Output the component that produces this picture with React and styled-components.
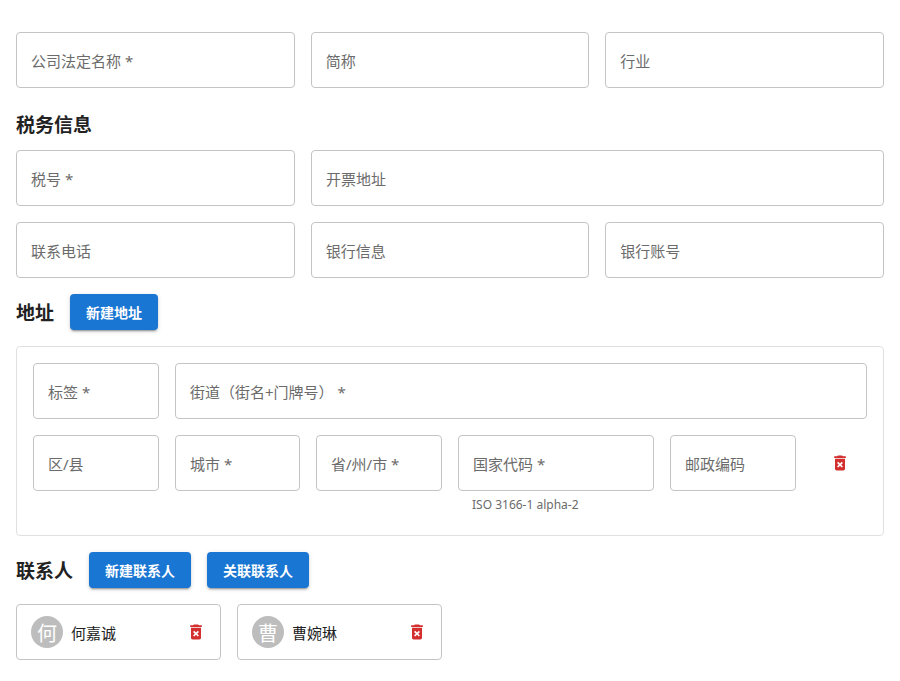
import React from 'react';
import styled, { createGlobalStyle } from 'styled-components';

const GlobalStyle = createGlobalStyle`
  body {
    margin: 0;
    background: #fff;
    font-family: "Noto Sans", "Noto Sans CJK SC", sans-serif;
    color: rgba(0, 0, 0, 0.87);
  }
`;

const Page = styled.div`
  width: 868px;
  padding: 32px 16px 16px;
  display: flex;
  flex-direction: column;
`;

const Row = styled.div`
  display: flex;
  gap: 16px;
  margin-bottom: ${(p) => p.mb ?? 16}px;
  align-items: flex-start;
`;

const FieldWrap = styled.div`
  flex: ${(p) => (p.w ? `0 0 ${p.w}px` : 1)};
  display: flex;
  flex-direction: column;
`;

const Field = styled.div`
  height: 54px;
  border: 1px solid #c4c4c4;
  border-radius: 4px;
  display: flex;
  align-items: center;
  padding: 0 14px;
  font-size: 15px;
  color: #6b6b6b;
`;

const Helper = styled.div`
  font-size: 12px;
  color: #6b6b6b;
  margin: 5px 14px 0;
`;

const SectionHead = styled.div`
  display: flex;
  align-items: center;
  gap: 16px;
  margin-bottom: ${(p) => p.mb ?? 16}px;
  min-height: 36px;
`;

const Title = styled.h3`
  margin: 0;
  font-size: 19px;
  font-weight: 700;
  color: #222;
`;

const Button = styled.button`
  height: 36px;
  padding: 0 16px;
  border: none;
  border-radius: 4px;
  background: #1976d2;
  color: #fff;
  font-family: inherit;
  font-size: 14px;
  font-weight: 700;
  box-shadow: 0 3px 1px -2px rgba(0,0,0,.2), 0 2px 2px rgba(0,0,0,.14), 0 1px 5px rgba(0,0,0,.12);
`;

const AddressBox = styled.div`
  border: 1px solid #e0e0e0;
  border-radius: 4px;
  padding: 16px 16px 22px;
  margin-bottom: 16px;
`;

const TrashCell = styled.div`
  flex: 1;
  height: 56px;
  display: flex;
  align-items: center;
  justify-content: center;
`;

const Contacts = styled.div`
  display: flex;
  gap: 16px;
`;

const Card = styled.div`
  width: 203px;
  height: 54px;
  border: 1px solid #c4c4c4;
  border-radius: 4px;
  display: flex;
  align-items: center;
  padding: 0 14px;
  gap: 8px;
  box-sizing: content-box;
  width: 175px;
`;

const Avatar = styled.div`
  width: 32px;
  height: 32px;
  border-radius: 50%;
  background: #bdbdbd;
  color: #fff;
  display: flex;
  align-items: center;
  justify-content: center;
  font-size: 20px;
`;

const Name = styled.span`
  flex: 1;
  font-size: 15px;
  color: #222;
`;

const Trash = () => (
  <svg width="20" height="20" viewBox="0 0 24 24" fill="#d32f2f">
    <path d="M6 19c0 1.1.9 2 2 2h8c1.1 0 2-.9 2-2V7H6v12zm2.46-7.12l1.41-1.41L12 12.59l2.12-2.12 1.41 1.41L13.41 14l2.12 2.12-1.41 1.41L12 15.41l-2.12 2.12-1.41-1.41L10.59 14l-2.13-2.12zM15.5 4l-1-1h-5l-1 1H5v2h14V4z" />
  </svg>
);

const F = ({ label, w, helper }) => (
  <FieldWrap w={w}>
    <Field>{label}</Field>
    {helper && <Helper>{helper}</Helper>}
  </FieldWrap>
);

export default function App() {
  return (
    <Page>
      <GlobalStyle />
      <Row mb={18}>
        <F label="公司法定名称 *" />
        <F label="简称" />
        <F label="行业" />
      </Row>
      <SectionHead mb={8}>
        <Title>税务信息</Title>
      </SectionHead>
      <Row>
        <F label="税号 *" w={279} />
        <F label="开票地址" />
      </Row>
      <Row>
        <F label="联系电话" />
        <F label="银行信息" />
        <F label="银行账号" />
      </Row>
      <SectionHead>
        <Title>地址</Title>
        <Button>新建地址</Button>
      </SectionHead>
      <AddressBox>
        <Row>
          <F label="标签 *" w={126} />
          <F label="街道（街名+门牌号） *" />
        </Row>
        <Row mb={0}>
          <F label="区/县" w={126} />
          <F label="城市 *" w={125} />
          <F label="省/州/市 *" w={126} />
          <F label="国家代码 *" w={196} helper="ISO 3166-1 alpha-2" />
          <F label="邮政编码" w={126} />
          <TrashCell><Trash /></TrashCell>
        </Row>
      </AddressBox>
      <SectionHead>
        <Title>联系人</Title>
        <Button>新建联系人</Button>
        <Button>关联联系人</Button>
      </SectionHead>
      <Contacts>
        <Card>
          <Avatar>何</Avatar>
          <Name>何嘉诚</Name>
          <Trash />
        </Card>
        <Card>
          <Avatar>曹</Avatar>
          <Name>曹婉琳</Name>
          <Trash />
        </Card>
      </Contacts>
    </Page>
  );
}
